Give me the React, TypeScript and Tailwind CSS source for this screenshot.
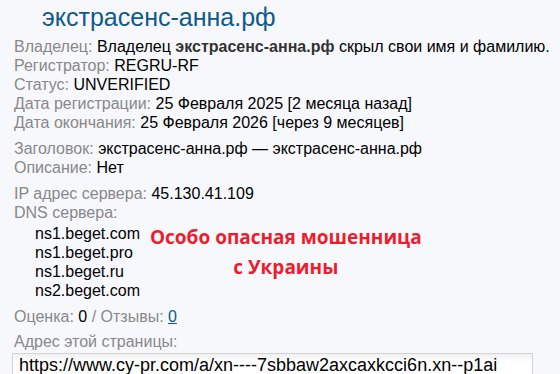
export default function App() {
  const rows1 = [
    { label: 'Регистратор:', value: 'REGRU-RF' },
    { label: 'Статус:', value: 'UNVERIFIED' },
    { label: 'Дата регистрации:', value: '25 Февраля 2025 [2 месяца назад]' },
    { label: 'Дата окончания:', value: '25 Февраля 2026 [через 9 месяцев]' },
  ];
  const dns = ['ns1.beget.com', 'ns1.beget.pro', 'ns1.beget.ru', 'ns2.beget.com'];

  return (
    <div className="w-[560px] h-[374px] overflow-hidden bg-[#f7f8fc] font-['Liberation_Sans',sans-serif] text-[16px] leading-[19px] text-black">
      {/* Заголовок домена */}
      <h1 className="pl-[42px] pt-[2px] text-[25px] leading-[30px] text-[#0f5a8a] font-normal">экстрасенс-анна.рф</h1>

      <div className="pl-[14px] pt-[5px]">
        <div>
          <span className="text-[#888]">Владелец: </span>
          Владелец <b className="text-[#333]">экстрасенс-анна.рф</b> скрыл свои имя и фамилию.
        </div>
        {rows1.map((r) => (
          <div key={r.label}>
            <span className="text-[#888]">{r.label} </span>
            {r.value}
          </div>
        ))}

        <div className="mt-[7px]">
          <span className="text-[#888]">Заголовок: </span>
          экстрасенс-анна.рф — экстрасенс-анна.рф
        </div>
        <div>
          <span className="text-[#888]">Описание: </span>
          Нет
        </div>

        <div className="mt-[7px]">
          <span className="text-[#888]">IP адрес сервера: </span>
          45.130.41.109
        </div>
        <div className="text-[#888]">DNS сервера:</div>
        <div className="flex">
          <div className="pl-[21px] pt-[2px]">
            {dns.map((d) => (
              <div key={d}>{d}</div>
            ))}
          </div>
          <div className="pl-[10px] text-center font-['Open_Sans',sans-serif] font-bold text-[19px] leading-[30px] text-[#ee1c2c]">
            Особо опасная мошенница
            <br />с Украины
          </div>
        </div>

        <div className="mt-[7px]">
          <span className="text-[#888]">Оценка: </span>0<span className="text-[#888]"> / Отзывы: </span>
          <a className="text-[#0f5a8a] underline">0</a>
        </div>

        <div className="mt-[6px] text-[#888]">Адрес этой страницы:</div>
        <div className="mt-[2px] w-[521px] -ml-[2px] h-[30px] border border-[#d4d4d4] bg-gradient-to-b from-[#f0f0f0] to-white to-[30%] pl-[6px] pt-[1px] text-[18px] leading-[20px]">
          https://www.cy-pr.com/a/xn----7sbbaw2axcaxkcci6n.xn--p1ai
        </div>
      </div>
    </div>
  );
}
